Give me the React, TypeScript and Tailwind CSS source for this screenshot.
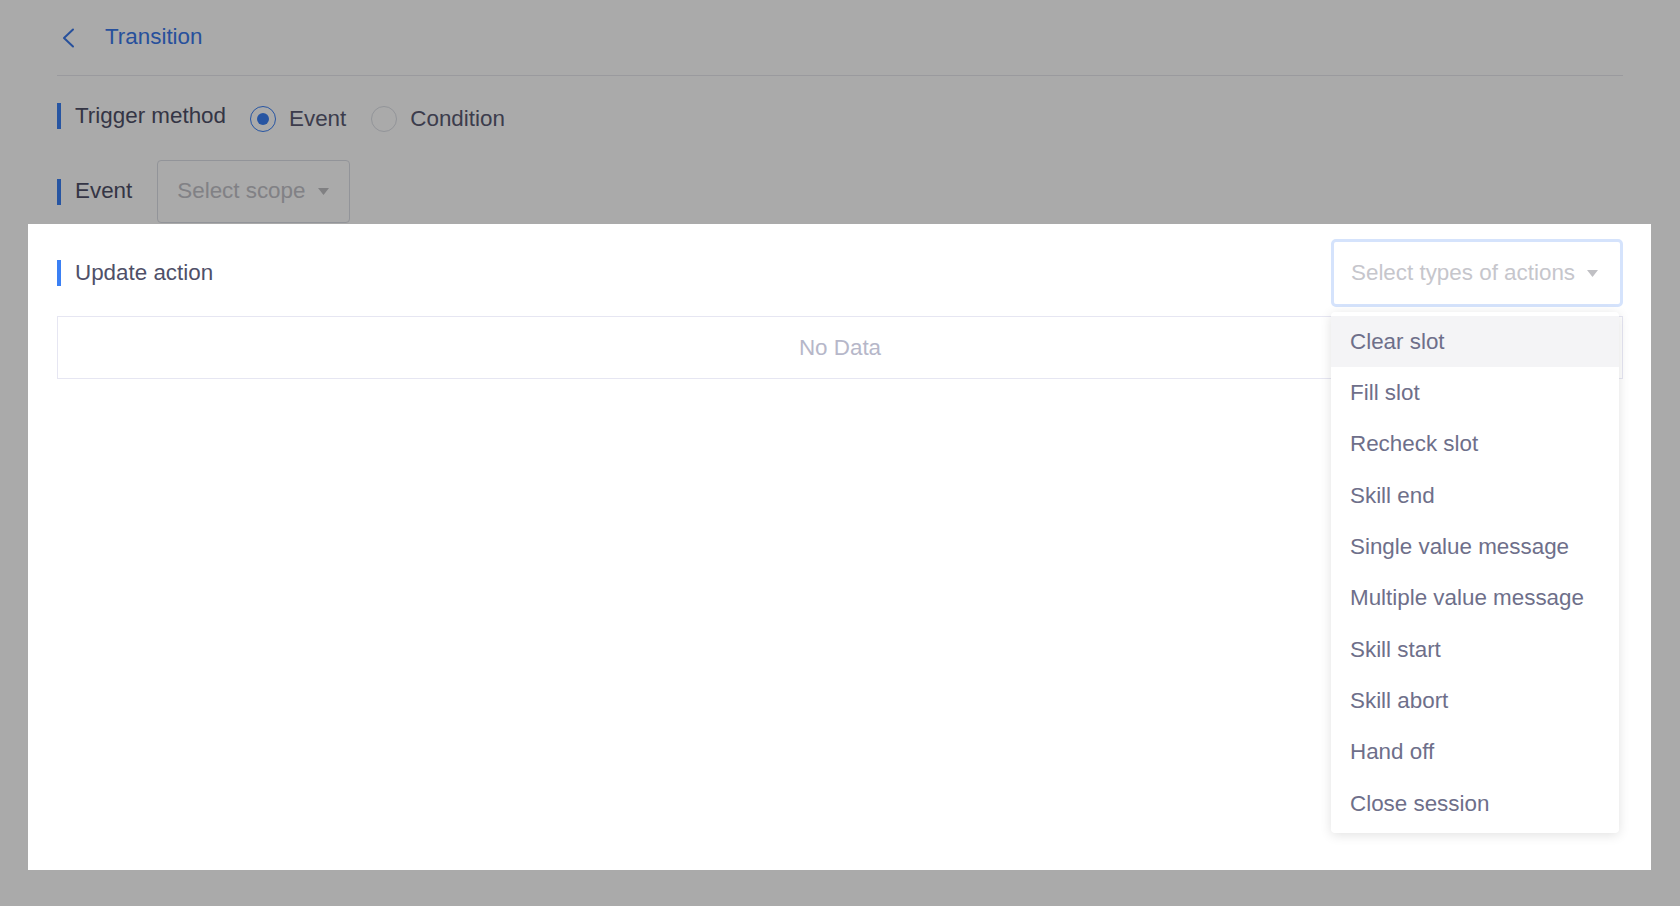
const actionTypes = [
  "Clear slot",
  "Fill slot",
  "Recheck slot",
  "Skill end",
  "Single value message",
  "Multiple value message",
  "Skill start",
  "Skill abort",
  "Hand off",
  "Close session",
]

function SectionLabel({ children }: { children: React.ReactNode }) {
  return (
    <div className="flex items-center gap-[14px]">
      <span className="h-[26px] w-[4px] bg-[#3b80f4]" />
      <span className="text-[22.4px] leading-none text-[#4f5068]">{children}</span>
    </div>
  )
}

function Caret() {
  return (
    <svg width="11" height="7" viewBox="0 0 11 7" className="shrink-0">
      <path d="M0 0h11L5.5 7z" fill="#c0c0c4" />
    </svg>
  )
}

function Radio({ label, checked }: { label: string; checked?: boolean }) {
  return (
    <label className="flex items-center gap-[13px]">
      <span
        className={
          checked
            ? "flex h-[26px] w-[26px] items-center justify-center rounded-full border border-[#3b80f4] bg-white"
            : "flex h-[26px] w-[26px] items-center justify-center rounded-full border border-[#dcdfe6] bg-white"
        }
      >
        {checked && <span className="h-[12px] w-[12px] rounded-full bg-[#3b80f4]" />}
      </span>
      <span className="text-[22.4px] leading-none text-[#5a5b73]">{label}</span>
    </label>
  )
}

export default function App() {
  return (
    <div className="min-h-[906px] bg-white px-[57px] font-['Liberation_Sans',Arial,sans-serif]">
      {/* header */}
      <div className="flex h-[76px] items-center gap-[30px] border-b border-[#e8e8ee] pl-[4px]">
        <svg width="14" height="20" viewBox="0 0 14 20" fill="none" className="shrink-0">
          <path d="M12 1.5L3 10l9 8.5" stroke="#3b79ea" strokeWidth="2" strokeLinecap="round" strokeLinejoin="round" />
        </svg>
        <span className="text-[22.4px] leading-none text-[#3b79ea]">Transition</span>
      </div>

      {/* trigger method */}
      <div className="mt-[17px] flex h-[46px] items-center gap-[24px]">
        <SectionLabel>Trigger method</SectionLabel>
        <div className="mt-[6px] flex items-center gap-[25px]">
          <Radio label="Event" checked />
          <Radio label="Condition" />
        </div>
      </div>

      {/* event */}
      <div className="mt-[21px] flex h-[63px] items-center gap-[25px]">
        <SectionLabel>Event</SectionLabel>
        <div className="flex h-[63px] w-[193px] items-center justify-between rounded-[4px] border border-[#dcdfe6] pl-[19px] pr-[20px]">
          <span className="text-[22.4px] leading-none text-[#c2c2c8]">Select scope</span>
          <Caret />
        </div>
      </div>

      {/* highlighted section */}
      <section className="relative z-10 -ml-[29px] -mr-[28px] mt-[1px] h-[646px] bg-white pl-[29px] pr-[28px] pt-[15px] shadow-[0_0_0_3000px_rgba(0,0,0,0.333)]">
        <div className="flex h-[68px] items-center justify-between">
          <SectionLabel>Update action</SectionLabel>
          <div className="relative">
            <div className="flex h-[68px] w-[292px] items-center justify-between rounded-[5px] border-[3px] border-[#d5e3fc] pl-[17px] pr-[22px]">
              <span className="text-[22.4px] leading-none text-[#c6c6cc]">Select types of actions</span>
              <Caret />
            </div>
            <ul className="absolute left-0 top-[73px] z-20 w-[288px] rounded-[4px] bg-white py-[4px] shadow-[0_2px_12px_rgba(0,0,0,0.12)]">
              {actionTypes.map((item, i) => (
                <li
                  key={item}
                  className={
                    i === 0
                      ? "flex h-[51.3px] items-center bg-[#f4f4f6] pl-[19px] text-[22.4px] text-[#6e6f8a]"
                      : "flex h-[51.3px] items-center pl-[19px] text-[22.4px] text-[#6e6f8a]"
                  }
                >
                  {item}
                </li>
              ))}
            </ul>
          </div>
        </div>

        <div className="mt-[9px] flex h-[63px] items-center justify-center border border-[#e6e6f2]">
          <span className="text-[22.4px] text-[#b6b7c9]">No Data</span>
        </div>
      </section>
    </div>
  )
}
